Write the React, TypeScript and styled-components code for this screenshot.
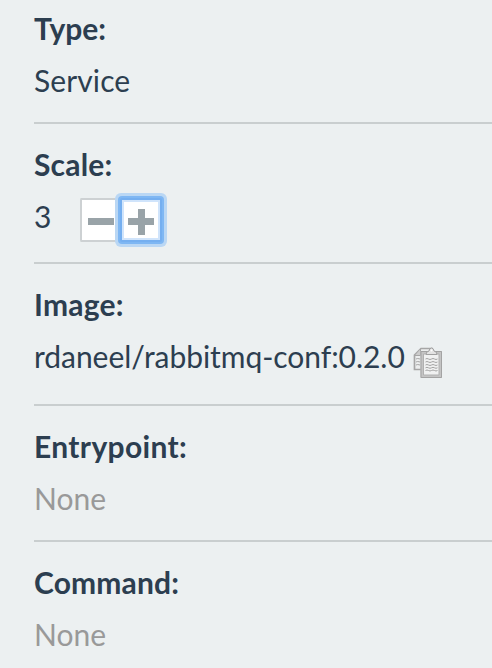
import React from "react";
import styled, { createGlobalStyle } from "styled-components";

const GlobalStyle = createGlobalStyle`
  * { box-sizing: border-box; }
  body { margin: 0; background: #ecf0f1; overflow: hidden; }
`;

const Panel = styled.main`
  height: 668px;
  overflow: hidden;
  padding-left: 34px;
  background: #ecf0f1;
  color: #2c3e50;
  font: 400 30px/36px Lato, sans-serif;
`;

const Field = styled.section`
  padding: 22px 0 24px;
  border-bottom: 2px solid #c9cecf;
  &:first-child { padding-top: 10px; }
  &:last-child { border-bottom: 0; }
`;

const Label = styled.div<{ $tracking?: number }>`
  font-weight: 700;
  margin-bottom: 16px;
  letter-spacing: ${(p) => p.$tracking ?? 0}px;
`;

const Value = styled.div<{ $height?: number; $muted?: boolean; $tracking?: number }>`
  display: flex;
  align-items: flex-start;
  height: ${(p) => p.$height ?? 36}px;
  white-space: nowrap;
  letter-spacing: ${(p) => p.$tracking ?? 0}px;
  color: ${(p) => (p.$muted ? "#999" : "inherit")};
`;

const Stepper = styled.div`
  display: flex;
  margin-left: 29px;
`;

const StepButton = styled.button<{ $focused?: boolean }>`
  width: ${(p) => (p.$focused ? 42 : 40)}px;
  height: 44px;
  flex: none;
  padding: 0;
  display: flex;
  border: 2px solid ${(p) => (p.$focused ? "#75aff0" : "#cdd1d3")};
  border-right-width: ${(p) => (p.$focused ? 2 : 0)}px;
  border-radius: 2px;
  background: #fff;
  outline: none;
  box-shadow: ${(p) =>
    p.$focused
      ? "0 0 0 2px #7fb7f3, 0 0 0 5px #bad7f4, inset 0 0 0 2px #d0e4fb"
      : "none"};
`;

const Glyph = styled.svg`
  display: block;
  flex: none;
  width: 38px;
  height: 40px;
  fill: #99a3a8;
`;

const CopyIcon = styled.svg`
  width: 30px;
  height: 32px;
  margin: 9px 0 0 8px;
  flex: none;
`;

export default function App() {
  return (
    <>
      <GlobalStyle />
      <Panel>
        <Field>
          <Label>Type:</Label>
          <Value $tracking={0.1}>Service</Value>
        </Field>
        <Field>
          <Label $tracking={0.2}>Scale:</Label>
          <Value $height={40}>
            3
            <Stepper>
              <StepButton aria-label="Decrease scale">
                <Glyph viewBox="0 0 38 40">
                  <path d="M6 18h26v7H6z" />
                </Glyph>
              </StepButton>
              <StepButton $focused aria-label="Increase scale">
                <Glyph viewBox="0 0 38 40">
                  <path d="M6 18h10V9h7v9h9v7h-9v10h-7V25H6z" />
                </Glyph>
              </StepButton>
            </Stepper>
          </Value>
        </Field>
        <Field>
          <Label $tracking={0.25}>Image:</Label>
          <Value $height={42} $tracking={-0.045}>
            rdaneel/rabbitmq-conf:0.2.0
            <CopyIcon viewBox="0 0 30 32" fill="none">
              <path d="M1.500 8L8 1.500h11V22.500H1.500z" fill="#eceeee" stroke="#a6a6a6" strokeWidth="1.700" />
              <path d="M2 8.500h5.500V2" fill="#ccc" stroke="#a6a6a6" />
              <path d="M3 12q1.500-1 4 0M3 15q1.500-1 4 0M3 18q1.500-1 4 0" stroke="#a6a6a6" />
              <path d="M9 5.500h18.500v24H9z" fill="#f0f1f1" stroke="#c4c4c4" strokeWidth="3" />
              <path d="M8 4.500h20.500v26H8z" stroke="#a3a3a3" />
              <path d="M10.500 7h15.500v21H10.500z" stroke="#b0b0b0" />
              <path d="M13 7.500q0-3 3-3.500 .5-3 2.500-3t2.500 3q3 .5 3 3.500z" fill="#e3e3e3" stroke="#a0a0a0" />
              <circle cx="18.500" cy="3.500" r="1" fill="#fff" />
              <path d="M12.500 12q1.500-1 3 0t3 0 3 0 3 0M12.500 15q1.500-1 3 0t3 0 3 0 3 0M12.500 18q1.500-1 3 0t3 0 3 0 3 0M12.500 20.800q1.500-1 3 0t3 0 3 0 3 0M12.500 23.500q1.500-1 3 0t3 0 3 0 3 0" stroke="#a3a3a3" />
            </CopyIcon>
          </Value>
        </Field>
        <Field>
          <Label $tracking={0.35}>Entrypoint:</Label>
          <Value $muted>None</Value>
        </Field>
        <Field>
          <Label $tracking={0.15}>Command:</Label>
          <Value $muted>None</Value>
        </Field>
      </Panel>
    </>
  );
}
